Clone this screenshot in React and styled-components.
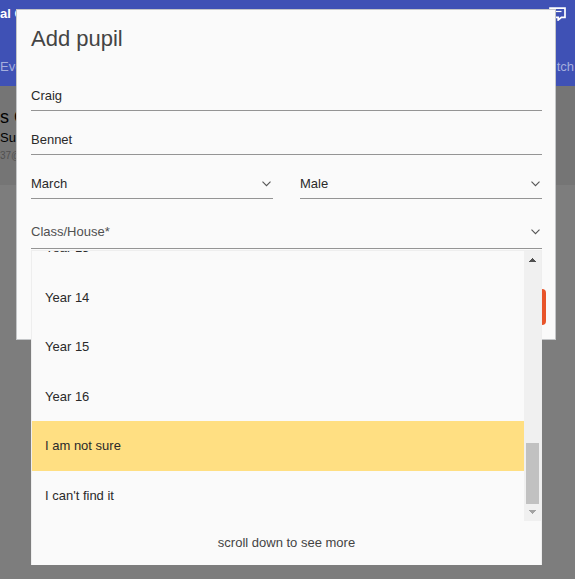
import React, { useState } from 'react';
import styled, { createGlobalStyle } from 'styled-components';

const GlobalStyle = createGlobalStyle`
    * {
        box-sizing: border-box;
    }
    body {
        margin: 0;
        background: #7d7d7d;
        font-family: 'Liberation Sans', Arial, sans-serif;
        font-size: 13px;
        color: #2a2a2a;
    }
`
const Page = styled.div`
    position: relative;
    min-height: 100vh;
    overflow: hidden;
`
const TopBar = styled.header`
    display: flex;
    flex-direction: column;
    justify-content: space-between;
    height: 86px;
    padding: 6px 0 11px;
    background: #3f51b5;
    color: #fff;
`
const BarRow = styled.div`
    display: flex;
    align-items: center;
    justify-content: space-between;
    padding-right: ${props => props.$right}px;
    height: 16px;
    line-height: 16px;
`
const SchoolName = styled.span`
    font-weight: bold;
`
const Tab = styled.a`
    color: #a5aedd;
    text-decoration: none;
`
const Profile = styled.section`
    display: flex;
    flex-direction: column;
    height: 99px;
    padding-top: 20px;
    background: #757575;
    color: #000;
`
const ProfileName = styled.div`
    font-size: 18px;
    line-height: 22px;
`
const ProfileText = styled.div`
    font-size: ${props => props.$small ? 10 : 13}px;
    line-height: ${props => props.$small ? 16 : 20}px;
    color: ${props => props.$small ? '#505050' : '#000'};
`
const Modal = styled.form`
    position: absolute;
    top: 9px;
    left: 16px;
    right: 19px;
    padding: 14px 13px 14px 14px;
    background: #fafafa;
    border: 1px solid #c4c6c8;
`
const Title = styled.h1`
    margin: 0 0 27px;
    font-size: 22px;
    font-weight: normal;
    line-height: 30px;
    color: #444;
`
const Fields = styled.div`
    display: flex;
    flex-direction: column;
    gap: 14px;
    margin-bottom: 18px;
`
const Columns = styled.div`
    display: grid;
    grid-template-columns: 1fr 1fr;
    gap: 27px;
`
const Input = styled.input`
    width: 100%;
    height: 30px;
    padding: 0;
    border: none;
    border-bottom: 1px solid #949494;
    background: transparent;
    font: inherit;
    color: inherit;
    outline: none;
`
const SelectBox = styled.div`
    position: relative;
    display: grid;
    align-items: center;
    height: ${props => props.$tall ? 32 : 30}px;
    padding-bottom: ${props => props.$tall ? 2 : 0}px;
    border-bottom: 1px solid #949494;
    color: ${props => props.$tall ? '#505050' : '#2a2a2a'};
    > svg {
        grid-area: 1 / 1;
        justify-self: end;
        margin-right: 2px;
        pointer-events: none;
    }
`
const Select = styled.select`
    grid-area: 1 / 1;
    width: 100%;
    height: 100%;
    padding: 0;
    border: none;
    background: transparent;
    appearance: none;
    font: inherit;
    color: inherit;
    outline: none;
`
const Popup = styled.div`
    position: absolute;
    top: calc(100% + 2px);
    left: 0;
    right: 0;
    z-index: 1;
    background: #fafafa;
    border: 1px solid #eee;
    border-bottom: none;
    color: #2a2a2a;
`
const PopupBody = styled.div`
    display: flex;
    height: 270px;
    overflow: hidden;
`
const Options = styled.ul`
    flex: 1;
    align-self: flex-end;
    display: grid;
    grid-auto-rows: 1fr;
    height: 298px;
    margin: 0;
    padding: 0 0 1px;
    list-style: none;
`
const Option = styled.li`
    display: flex;
    align-items: center;
    padding: 0 13px;
    background: ${props => props.$active ? '#ffdf82' : 'transparent'};
    cursor: pointer;
`
const ScrollTrack = styled.div`
    display: flex;
    flex-direction: column;
    align-items: center;
    justify-content: space-between;
    width: 17px;
    padding: 7px 0;
    background: #f0f0f0;
`
const ScrollEnd = styled.div`
    display: flex;
    flex-direction: column;
    align-items: center;
    gap: 6px;
`
const Thumb = styled.div`
    width: 13px;
    height: 61px;
    background: #c1c1c1;
`
const Hint = styled.div`
    height: 44px;
    line-height: 44px;
    text-align: center;
    color: #444;
`
const Actions = styled.div`
    display: flex;
    justify-content: flex-end;
    margin: 40px -4px 0 0;
`
const SubmitButton = styled.button`
    width: 96px;
    height: 36px;
    border: none;
    border-radius: 4px;
    background: #e8542a;
`

const Chevron = () => (
    <svg width="9" height="6" viewBox="0 0 9 6" fill="none" stroke="#555" strokeWidth="1.1">
        <path d="M0.5 0.7 L4.5 4.7 L8.5 0.7" />
    </svg>
)

const ChatIcon = () => (
    <svg width="17" height="14" viewBox="0 0 17 14">
        <path d="M1 1.2H16V10.3H12.4L9.2 13V10.3H1Z" fill="none" stroke="#fff" strokeWidth="1.7" />
        <path d="M4 4.5H12.5" stroke="#fff" strokeWidth="1.2" />
    </svg>
)

const Triangle = ({ down }) => (
    <svg width="7" height="4" viewBox="0 0 7 4" shapeRendering="crispEdges">
        <path d={down ? 'M0 0H7L3.5 4Z' : 'M0 4H7L3.5 0Z'} fill={down ? '#a3a3a3' : '#505050'} />
    </svg>
)

const classes = ['Year 13', 'Year 14', 'Year 15', 'Year 16', 'I am not sure', "I can't find it"];

const App = () => {
    const [active, setActive] = useState('I am not sure');
    return (
        <Page>
            <GlobalStyle />
            <TopBar>
                <BarRow $right={9}>
                    <SchoolName>al C</SchoolName>
                    <ChatIcon />
                </BarRow>
                <BarRow $right={1}>
                    <Tab href="#events">Eve</Tab>
                    <Tab href="#match">tch</Tab>
                </BarRow>
            </TopBar>
            <Profile>
                <ProfileName>s C</ProfileName>
                <ProfileText>Sue</ProfileText>
                <ProfileText $small>37@</ProfileText>
            </Profile>
            <Modal>
                <Title>Add pupil</Title>
                <Fields>
                    <Input aria-label="First name" defaultValue="Craig" />
                    <Input aria-label="Surname" defaultValue="Bennet" />
                    <Columns>
                        <SelectBox>
                            <Select aria-label="Month of birth"><option>March</option></Select>
                            <Chevron />
                        </SelectBox>
                        <SelectBox>
                            <Select aria-label="Gender"><option>Male</option></Select>
                            <Chevron />
                        </SelectBox>
                    </Columns>
                </Fields>
                <SelectBox $tall>
                    <Select aria-label="Class/House"><option>Class/House*</option></Select>
                    <Chevron />
                    <Popup>
                        <PopupBody>
                            <Options role="listbox" aria-label="Class/House">
                                {classes.map(name => (
                                    <Option
                                        key={name}
                                        role="option"
                                        aria-selected={name === active}
                                        $active={name === active}
                                        onMouseEnter={() => setActive(name)}
                                    >
                                        {name}
                                    </Option>
                                ))}
                            </Options>
                            <ScrollTrack>
                                <Triangle />
                                <ScrollEnd>
                                    <Thumb />
                                    <Triangle down />
                                </ScrollEnd>
                            </ScrollTrack>
                        </PopupBody>
                        <Hint>scroll down to see more</Hint>
                    </Popup>
                </SelectBox>
                <Actions>
                    <SubmitButton type="button" aria-label="Add pupil" />
                </Actions>
            </Modal>
        </Page>
    );
};

export default App;
